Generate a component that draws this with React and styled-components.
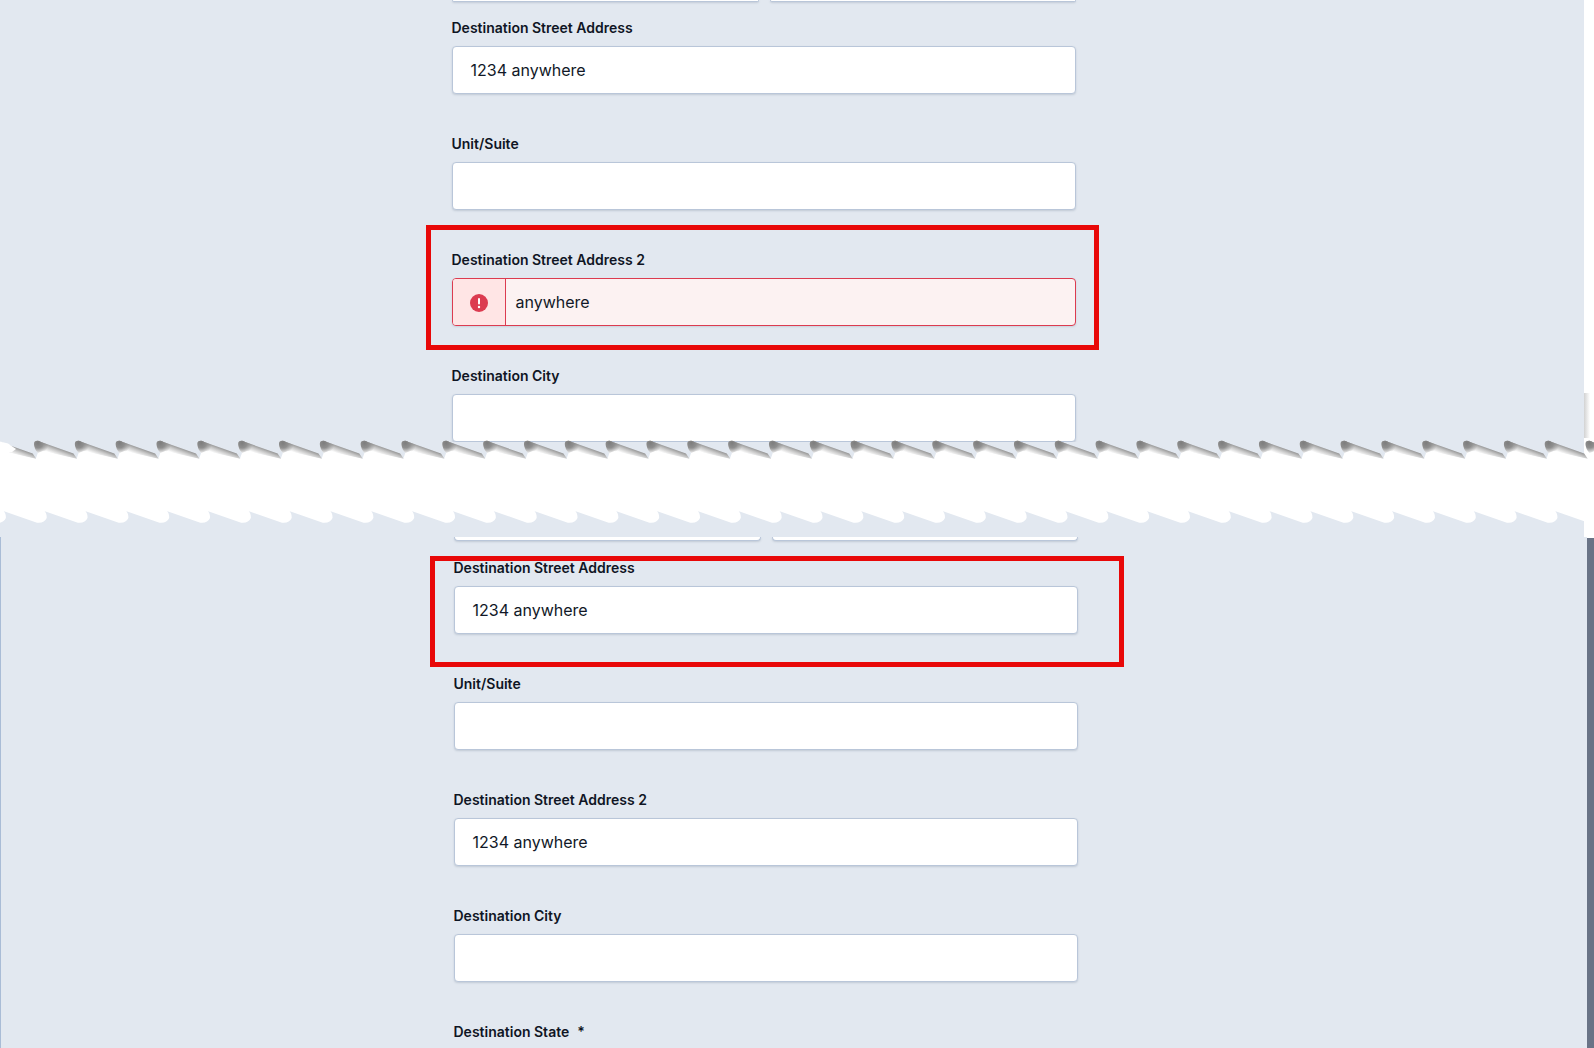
import React from 'react';
import styled, { createGlobalStyle } from 'styled-components';

const Global = createGlobalStyle`
  html, body { margin: 0; padding: 0; background: #fff; overflow: hidden; }
  body { font-family: Inter, "Liberation Sans", sans-serif; }
`;

const BLUE = '#e2e8f0';

const Page = styled.div`
  position: relative;
  width: 1594px;
  height: 1048px;
  overflow: hidden;
  background: #fff;
  display: flex;
  flex-direction: column;
`;
const TopPane = styled.section`
  width: 1584px;
  height: 442px;
  flex: none;
  overflow: hidden;
  background: ${BLUE};
`;
const BottomWrap = styled.div`
  flex: 1;
  display: flex;
  min-height: 0;
`;
const BottomPane = styled.section`
  flex: 1;
  overflow: hidden;
  background: ${BLUE};
  border-left: 1px solid #a9bcd6;
`;
const Scrollbar = styled.div`
  width: 7px;
  margin-top: 1px;
  background: #697386;
`;
const Tear = styled.svg`
  display: block;
  flex: none;
  position: relative;
  z-index: 1;
  width: 1594px;
  height: 99px;
  margin-top: -4px;
`;
const Form = styled.div`
  width: 624px;
  margin-left: ${p => p.$left}px;
`;
const StubRow = styled.div`
  display: grid;
  grid-template-columns: 1fr 1fr;
  column-gap: 11px;
  margin-bottom: ${p => p.$gap}px;
`;
const Stub = styled.div`
  height: ${p => p.$h}px;
  box-sizing: border-box;
  background: #fff;
  border: 1px solid #b9c6d9;
  border-top: 0;
  border-radius: 0 0 4px 4px;
  box-shadow: 0 1px 2px rgba(100, 116, 139, 0.25);
`;
const Field = styled.div`
  margin-bottom: 40px;
`;
const Label = styled.div`
  font-size: 14px;
  font-weight: 600;
  line-height: 20px;
  color: #0f1524;
  margin: 0 0 8px -0.5px;
`;
const Star = styled.span`
  margin-left: 8px;
`;
const InputBox = styled.div`
  height: 48px;
  box-sizing: border-box;
  display: flex;
  align-items: center;
  padding-left: 17.5px;
  font-size: 16px;
  color: #111827;
  background: #fff;
  border: 1px solid #b9c6d9;
  border-radius: 4px;
  box-shadow: 0 1px 2px rgba(100, 116, 139, 0.25);
`;
const ErrorBox = styled.div`
  height: 48px;
  box-sizing: border-box;
  display: flex;
  align-items: stretch;
  font-size: 16px;
  color: #111827;
  background: #fcf2f2;
  border: 1px solid #dc3b50;
  border-radius: 4px;
  overflow: hidden;
  box-shadow: 0 1px 2px rgba(100, 116, 139, 0.2);
`;
const ErrorIcon = styled.div`
  width: 52px;
  flex: none;
  box-sizing: content-box;
  display: flex;
  align-items: center;
  justify-content: center;
  background: #ffe5e5;
  border-right: 1px solid #dc3b50;
`;
const ErrorText = styled.div`
  display: flex;
  align-items: center;
  padding-left: 9.5px;
`;
const AlertSvg = styled.svg`
  margin-top: 2px;
`;
const Callout = styled.div`
  position: absolute;
  z-index: 2;
  box-sizing: border-box;
  left: ${p => p.$x}px;
  top: ${p => p.$y}px;
  width: ${p => p.$w}px;
  height: ${p => p.$h}px;
  border: 5px solid #e80808;
`;
const EdgeShadow = styled.div`
  position: absolute;
  left: 1584px;
  top: 393px;
  width: 6px;
  height: 56px;
  background: linear-gradient(to right, #d2d2d2, #ffffff);
`;

const AlertIcon = () => (
  <AlertSvg width="18" height="18" viewBox="0 0 18 18">
    <circle cx="9" cy="9" r="9" fill="#dc3b50" />
    <rect x="8" y="4" width="2" height="6.5" rx="1" fill="#fff" />
    <circle cx="9" cy="13" r="1.2" fill="#fff" />
  </AlertSvg>
);

const P = 40.83;
const teeth = Array.from({ length: 40 }, (_, i) => i - 1);
const tip = k => 34 + P * k;
const lo = k => 3.3 + P * k;

const whitePath = () => {
  let d = 'M0,452';
  for (let k = -1; k < 39; k++) {
    const x = tip(k);
    d += ` L${x + 4},452.5 L${x + 9},450.5 L${x + 42.7},458.5`;
  }
  d += ' L1594,458 L1594,525';
  for (let k = 38; k >= -1; k--) {
    const x = lo(k);
    d += ` L${x + P},510.7 Q${x + 43.6},513 ${x + 43.4},518 Q${x + 41},523.5 ${x + 33.7},522.7 L${x},511`;
  }
  d += ' L0,511 Z';
  return d;
};

const TearEdge = () => (
  <Tear viewBox="0 438 1594 99">
    <defs>
      <linearGradient id="toothShade" gradientUnits="userSpaceOnUse" x1="20" y1="446.3" x2="17.4" y2="453.3">
        <stop offset="0" stopColor="#969696" />
        <stop offset="0.4" stopColor="#c6c6c6" />
        <stop offset="1" stopColor="#ffffff" />
      </linearGradient>
      <radialGradient id="tipShade" gradientUnits="userSpaceOnUse" cx="4" cy="443" r="11">
        <stop offset="0" stopColor="#7d7d7d" />
        <stop offset="0.45" stopColor="#8f8f8f" />
        <stop offset="1" stopColor="#8f8f8f" stopOpacity="0" />
      </radialGradient>
    </defs>
    <rect x="0" y="442" width="1584" height="20" fill={BLUE} />
    <rect x="0" y="500" width="1584" height="37" fill={BLUE} />
    <rect x="1584" y="438" width="10" height="99" fill="#fff" />
    <path d={whitePath()} fill="#fff" />
    {teeth.map(k => (
      <g key={k} transform={`translate(${tip(k)} 0)`}>
        <path
          d="M0,444 Q0,440.5 4,440.7 Q6,441 7,442 L39.5,453.6 L43,458.7 L9,451 Q6,452 4,453 Q0,449 0,444 Z"
          fill="url(#toothShade)"
        />
        <path
          d="M0,444 Q0,440.5 4,440.7 Q6,441 7,442 L16,445.2 L16,452 L9,451 Q6,452 4,453 Q0,449 0,444 Z"
          fill="url(#tipShade)"
        />
      </g>
    ))}
    <path d="M0,441.6 L8,443.6 L16,449 L12,452 L0,452 Z" fill="#fff" />
  </Tear>
);

const TextField = ({ label, value, star }) => (
  <Field>
    <Label>
      {label}
      {star && <Star>*</Star>}
    </Label>
    <InputBox>{value}</InputBox>
  </Field>
);

const ErrorField = ({ label, value }) => (
  <Field>
    <Label>{label}</Label>
    <ErrorBox>
      <ErrorIcon>
        <AlertIcon />
      </ErrorIcon>
      <ErrorText>{value}</ErrorText>
    </ErrorBox>
  </Field>
);

export default function App() {
  return (
    <Page>
      <Global />
      <TopPane>
        <Form $left={452}>
          <StubRow $gap={16}>
            <Stub $h={2} />
            <Stub $h={2} />
          </StubRow>
          <TextField label="Destination Street Address" value="1234 anywhere" />
          <TextField label="Unit/Suite" />
          <ErrorField label="Destination Street Address 2" value="anywhere" />
          <TextField label="Destination City" />
        </Form>
      </TopPane>
      <TearEdge />
      <BottomWrap>
        <BottomPane>
          <Form $left={453}>
            <StubRow $gap={17}>
              <Stub $h={4} />
              <Stub $h={4} />
            </StubRow>
            <TextField label="Destination Street Address" value="1234 anywhere" />
            <TextField label="Unit/Suite" />
            <TextField label="Destination Street Address 2" value="1234 anywhere" />
            <TextField label="Destination City" />
            <TextField label="Destination State" star />
          </Form>
        </BottomPane>
        <Scrollbar />
      </BottomWrap>
      <EdgeShadow />
      <Callout $x={426} $y={225} $w={673} $h={125} />
      <Callout $x={430} $y={556} $w={694} $h={111} />
    </Page>
  );
}
